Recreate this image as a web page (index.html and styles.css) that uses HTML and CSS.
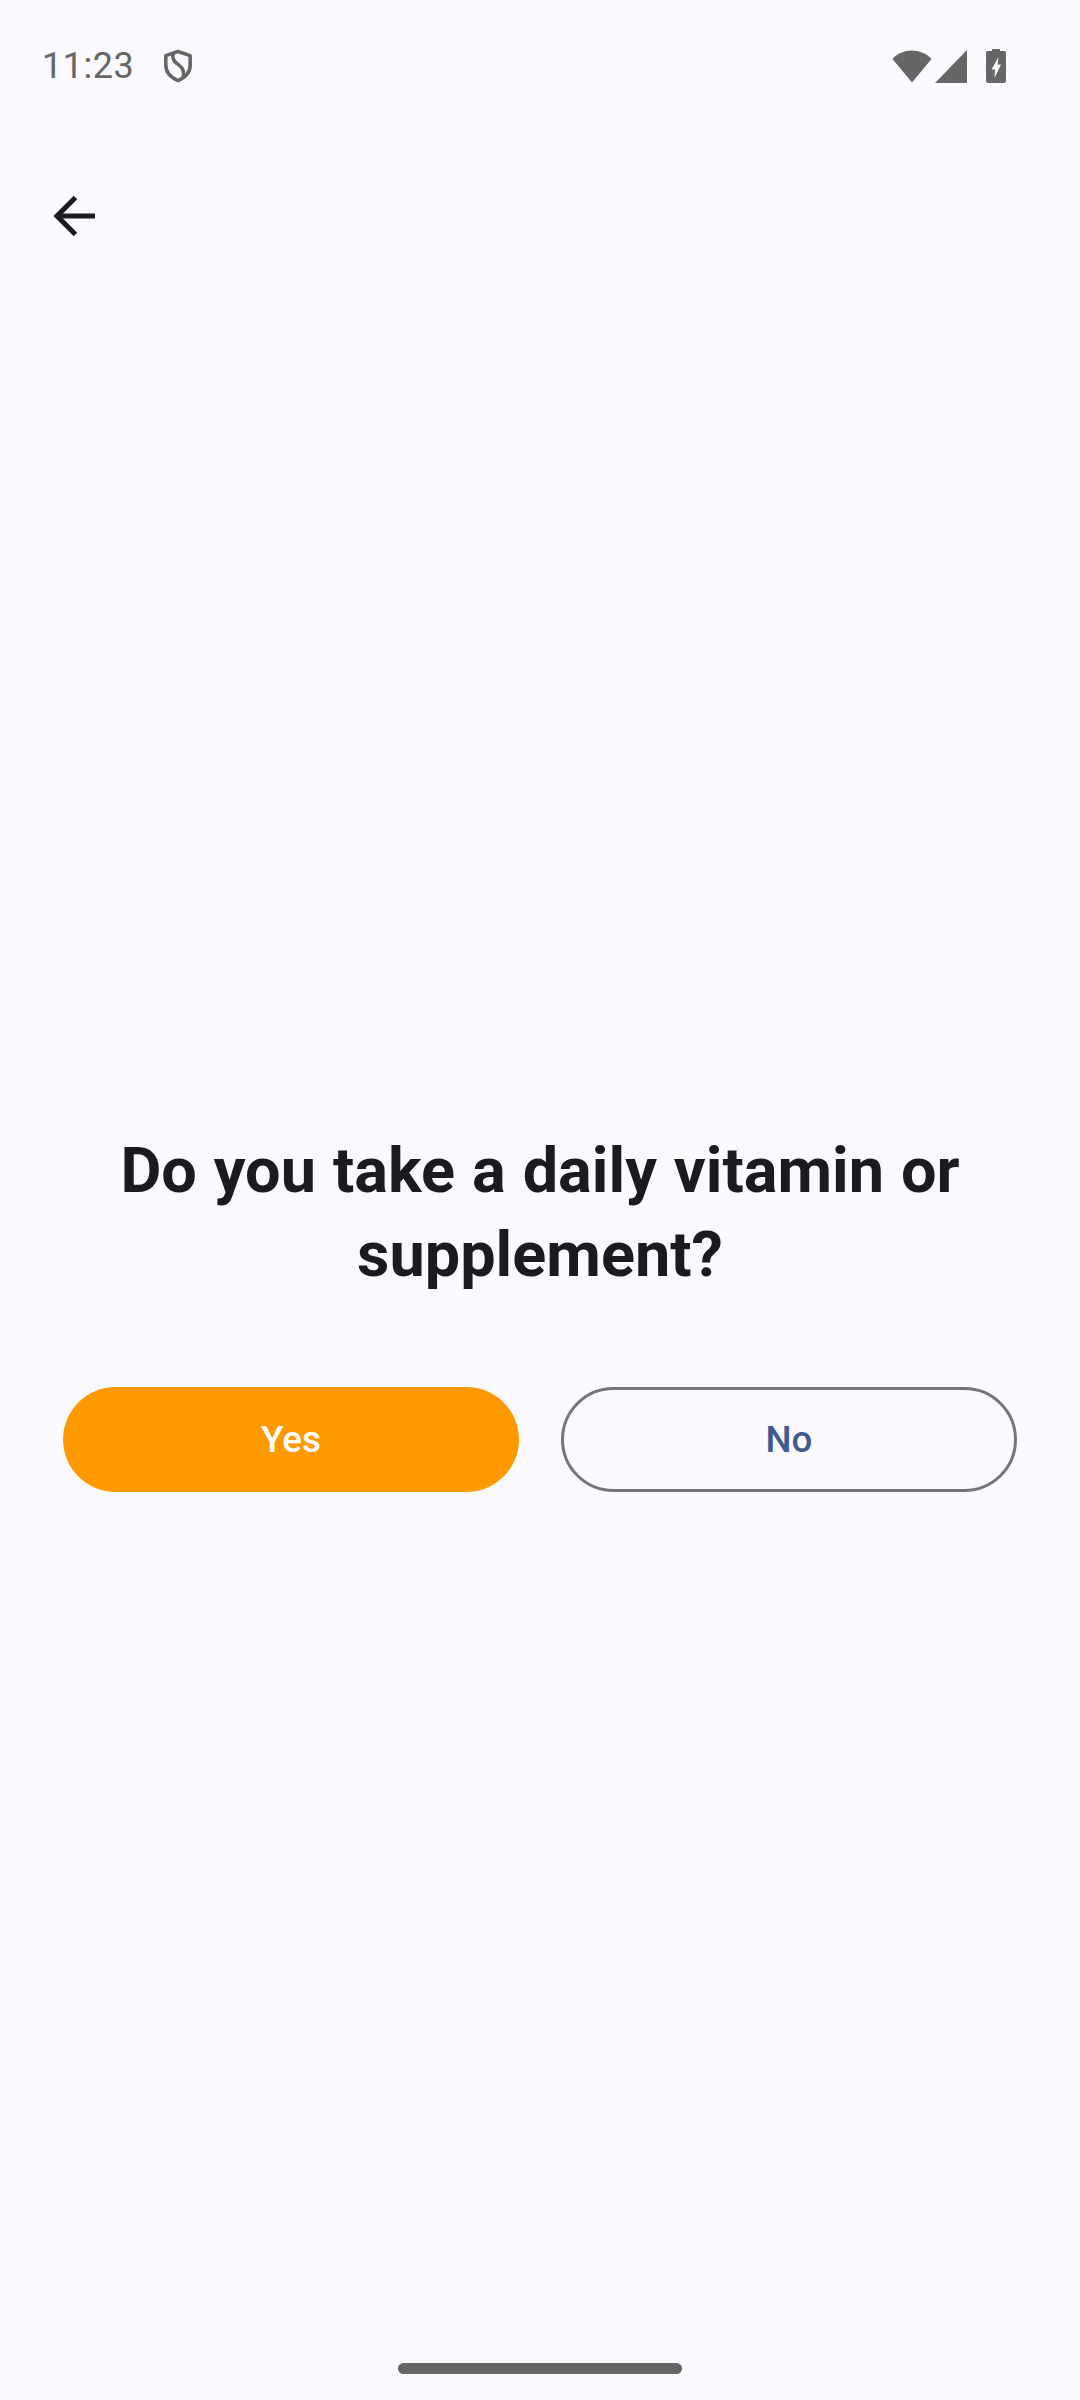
FILE: index.html
```html
<!DOCTYPE html>
<html lang="en">

<head>
    <meta charset="UTF-8">
    <meta name="viewport" content="width=device-width, initial-scale=1">
    <title>Daily vitamin</title>
    <link rel="stylesheet" href="styles.css">
</head>

<body>
    <div class="screen">
        <div class="status-bar">
            <div class="status-left">
                <span class="clock">11:23</span>
                <svg class="shield" width="30" height="34" viewBox="0 0 32 36">
                    <path d="M16 2.500 L29 7 V17 C29 25 23.500 30.500 16 33.500 C8.500 30.500 3 25 3 17 V7 Z" fill="none" stroke="#666" stroke-width="3.800" stroke-linejoin="round"/>
                    <path d="M11 4.500 C9 11 13 14 17 17 C21 20 23 24 21.500 30" fill="none" stroke="#666" stroke-width="3.800"/>
                </svg>
            </div>
            <div class="status-right">
                <svg width="40" height="33" viewBox="0 0 40 33">
                    <path d="M0.500 9 C10 -2.500 29.500 -2.500 39.500 9 L20 32.500 Z" fill="#666"/>
                </svg>
                <svg width="32" height="33" viewBox="0 0 32 33">
                    <path d="M32 0 V33 H0 Z" fill="#666"/>
                </svg>
                <svg class="battery" width="20" height="34" viewBox="0 0 20 34">
                    <path d="M6 0 H14 V2 H18 A2 2 0 0 1 20 4 V32 A2 2 0 0 1 18 34 H2 A2 2 0 0 1 0 32 V4 A2 2 0 0 1 2 2 H6 Z" fill="#666"/>
                    <path d="M12.500 8 L5.500 20.500 H9 L8.500 29 L15 15.500 H11.500 Z" fill="#faf9fe"/>
                </svg>
            </div>
        </div>

        <div class="top-bar">
            <svg width="42" height="42" viewBox="0 0 42 42">
                <path d="M42 21 H4 M22.500 2.500 L4 21 L22.500 39.500" fill="none" stroke="#1a1b20" stroke-width="5"/>
            </svg>
        </div>

        <div class="content">
            <h1 class="question">Do you take a daily vitamin or supplement?</h1>
            <div class="answers">
                <button class="answer answer-yes">Yes</button>
                <button class="answer answer-no">No</button>
            </div>
        </div>

        <div class="nav-bar">
            <div class="home-handle"></div>
        </div>
    </div>
</body>

</html>
```

FILE: styles.css
```css
* {
    box-sizing: border-box;
}

html,
body {
    margin: 0;
    padding: 0;
}

body {
    font-family: Roboto, "Noto Sans", sans-serif;
    background-color: #faf9fe;
    color: #1a1b20;
}

.screen {
    width: 1080px;
    height: 2400px;
    display: flex;
    flex-direction: column;
    overflow: hidden;
}

.status-bar {
    height: 132px;
    padding: 0 74px 0 42px;
    display: flex;
    align-items: center;
    justify-content: space-between;
}

.status-left {
    display: flex;
    align-items: center;
    gap: 29px;
}

.clock {
    font-size: 36px;
    color: #666;
    letter-spacing: 0.5px;
}

.status-right {
    display: flex;
    align-items: center;
    gap: 3px;
}

.battery {
    margin-left: 16px;
}

.top-bar {
    height: 168px;
    padding-left: 53px;
    display: flex;
    align-items: center;
}

.content {
    margin-top: 829px;
    padding: 0 63px;
}

.question {
    margin: 0;
    font-size: 63px;
    line-height: 84px;
    font-weight: 700;
    word-spacing: 1.3px;
    text-align: center;
}

.answers {
    display: grid;
    grid-template-columns: 1fr 1fr;
    gap: 42px;
    margin-top: 90px;
}

.answer {
    height: 105px;
    border-radius: 53px;
    font-family: Roboto, "Noto Sans", sans-serif;
    font-size: 36.750px;
    font-weight: 500;
    padding: 0;
}

.answer-yes {
    background-color: #ff9900;
    color: #fff;
    border: none;
}

.answer-no {
    background-color: transparent;
    color: #3f5b92;
    border: 3px solid #74757d;
}

.nav-bar {
    margin-top: auto;
    height: 37px;
    display: flex;
    justify-content: center;
}

.home-handle {
    width: 284px;
    height: 11px;
    border-radius: 6px;
    background-color: #666;
}
```
